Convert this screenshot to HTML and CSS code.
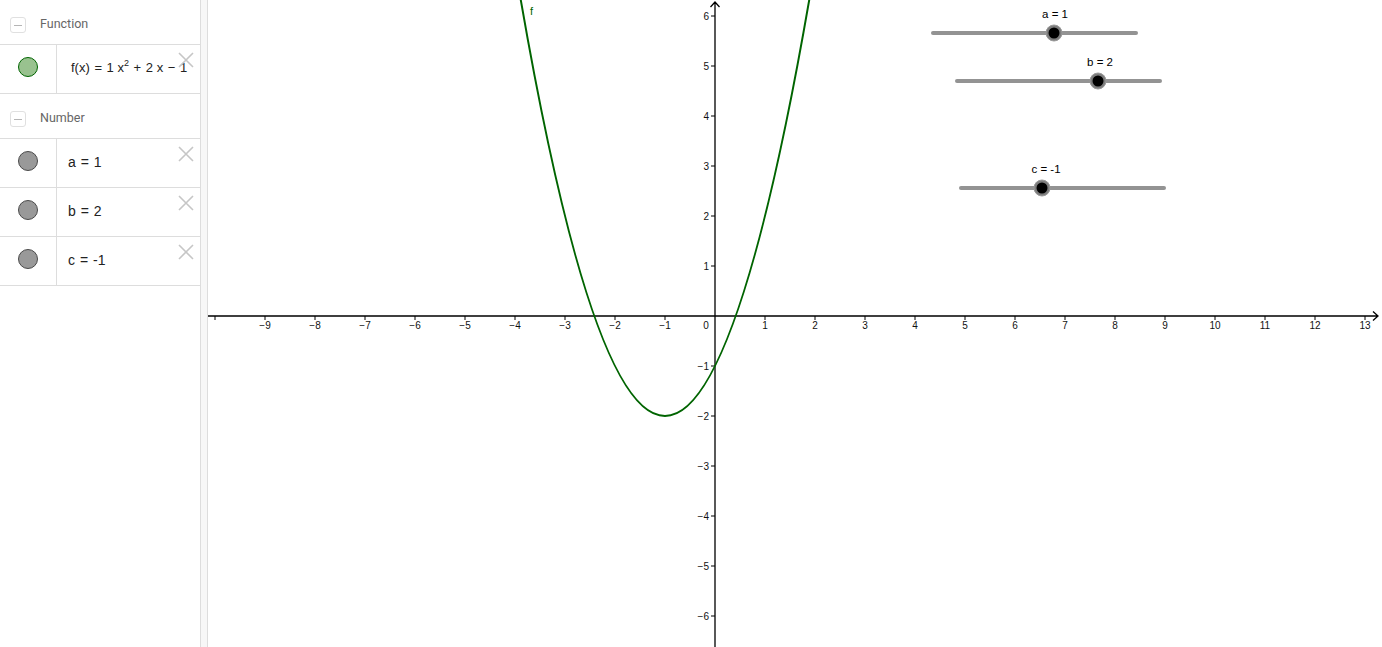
FILE: index.html
```html
<!DOCTYPE html>
<html lang="en">
<head>
<meta charset="utf-8">
<title>Quadratic sliders</title>
<link rel="stylesheet" href="styles.css">
</head>
<body>
<div class="app">
  <aside class="algebra">
    <div class="group-head">
      <span class="toggle"><span class="toggle-bar"></span></span>
      <span class="group-title">Function</span>
    </div>
    <div class="item">
      <div class="marker"><span class="dot dot-fn"></span></div>
      <div class="expr expr-fn">f(x) <span class="op">=</span> 1 x<sup>2</sup> <span class="op">+</span> 2 x <span class="op">−</span> 1</div>
      <span class="del"><svg viewBox="0 0 16 16" width="16" height="16"><path d="M1 1L15 15M15 1L1 15"/></svg></span>
    </div>

    <div class="group-head">
      <span class="toggle"><span class="toggle-bar"></span></span>
      <span class="group-title">Number</span>
    </div>
    <div class="item">
      <div class="marker"><span class="dot dot-num"></span></div>
      <div class="expr">a <span class="op">=</span> 1</div>
      <span class="del"><svg viewBox="0 0 16 16" width="16" height="16"><path d="M1 1L15 15M15 1L1 15"/></svg></span>
    </div>
    <div class="item">
      <div class="marker"><span class="dot dot-num"></span></div>
      <div class="expr">b <span class="op">=</span> 2</div>
      <span class="del"><svg viewBox="0 0 16 16" width="16" height="16"><path d="M1 1L15 15M15 1L1 15"/></svg></span>
    </div>
    <div class="item">
      <div class="marker"><span class="dot dot-num"></span></div>
      <div class="expr">c <span class="op">=</span> -1</div>
      <span class="del"><svg viewBox="0 0 16 16" width="16" height="16"><path d="M1 1L15 15M15 1L1 15"/></svg></span>
    </div>
  </aside>

  <div class="splitter"></div>

  <main class="graphics">
    <svg class="plot" width="1174" height="647" viewBox="208 0 1174 647">
      <!-- axes -->
      <path class="axis" d="M208 316H1378M1373 311.5L1378 316L1373 320.5"/>
      <path class="axis" d="M715 2V647M710.5 7L715 2L719.5 7"/>
      <!-- ticks -->
      <path class="tick" d="M215 316v4M265 316v4M315 316v4M365 316v4M415 316v4M465 316v4M515 316v4M565 316v4M615 316v4M665 316v4M765 316v4M815 316v4M865 316v4M915 316v4M965 316v4M1015 316v4M1065 316v4M1115 316v4M1165 316v4M1215 316v4M1265 316v4M1315 316v4M1365 316v4"/>
      <path class="tick" d="M711 16h4M711 66h4M711 116h4M711 166h4M711 216h4M711 266h4M711 366h4M711 416h4M711 466h4M711 516h4M711 566h4M711 616h4"/>
      <!-- x labels -->
      <g class="lbl lbl-x">
        <text x="265" y="329">−9</text>
        <text x="315" y="329">−8</text>
        <text x="365" y="329">−7</text>
        <text x="415" y="329">−6</text>
        <text x="465" y="329">−5</text>
        <text x="515" y="329">−4</text>
        <text x="565" y="329">−3</text>
        <text x="615" y="329">−2</text>
        <text x="665" y="329">−1</text>
        <text x="706" y="329">0</text>
        <text x="765" y="329">1</text>
        <text x="815" y="329">2</text>
        <text x="865" y="329">3</text>
        <text x="915" y="329">4</text>
        <text x="965" y="329">5</text>
        <text x="1015" y="329">6</text>
        <text x="1065" y="329">7</text>
        <text x="1115" y="329">8</text>
        <text x="1165" y="329">9</text>
        <text x="1215" y="329">10</text>
        <text x="1265" y="329">11</text>
        <text x="1315" y="329">12</text>
        <text x="1365" y="329">13</text>
      </g>
      <!-- y labels -->
      <g class="lbl lbl-y">
        <text x="709" y="20">6</text>
        <text x="709" y="70">5</text>
        <text x="709" y="120">4</text>
        <text x="709" y="170">3</text>
        <text x="709" y="220">2</text>
        <text x="709" y="270">1</text>
        <text x="709" y="370">−1</text>
        <text x="709" y="420">−2</text>
        <text x="709" y="470">−3</text>
        <text x="709" y="520">−4</text>
        <text x="709" y="570">−5</text>
        <text x="709" y="620">−6</text>
      </g>
      <!-- parabola f(x) = x^2 + 2x - 1 -->
      <path class="curve" d="M505 -96Q665 928 825 -96"/>
      <text class="curve-label" x="530" y="15">f</text>

      <!-- sliders -->
      <g class="slider">
        <text class="slider-label" x="1055" y="18">a = 1</text>
        <line class="slider-track" x1="933" y1="33" x2="1136" y2="33"/>
        <circle class="knob-ring" cx="1054" cy="33" r="8"/>
        <circle class="knob" cx="1054" cy="33" r="5.5"/>
      </g>
      <g class="slider">
        <text class="slider-label" x="1100" y="66">b = 2</text>
        <line class="slider-track" x1="957" y1="81" x2="1160" y2="81"/>
        <circle class="knob-ring" cx="1098" cy="81" r="8"/>
        <circle class="knob" cx="1098" cy="81" r="5.5"/>
      </g>
      <g class="slider">
        <text class="slider-label" x="1046" y="173">c = -1</text>
        <line class="slider-track" x1="961" y1="188" x2="1164" y2="188"/>
        <circle class="knob-ring" cx="1042" cy="188" r="8"/>
        <circle class="knob" cx="1042" cy="188" r="5.5"/>
      </g>
    </svg>
  </main>
</div>
</body>
</html>
```

FILE: styles.css
```css
html, body {
  margin: 0;
  padding: 0;
  background: #fff;
  overflow: hidden;
}

.app {
  display: flex;
  width: 1382px;
  height: 647px;
}

/* ---------- algebra view ---------- */
.algebra {
  width: 200px;
  flex: none;
  overflow: hidden;
  background: #fff;
  font-family: "Liberation Sans", Arial, sans-serif;
}

.group-head {
  box-sizing: border-box;
  height: 45px;
  display: flex;
  align-items: flex-start;
  padding-top: 16px;
  border-bottom: 1px solid #dddddd;
}

.toggle {
  box-sizing: border-box;
  width: 16px;
  height: 16px;
  margin-top: 1px;
  margin-left: 10px;
  border: 1px solid #e0e0e0;
  border-radius: 3px;
  display: flex;
  align-items: center;
  justify-content: center;
}

.toggle-bar {
  width: 8px;
  height: 1px;
  background: #b5b5b5;
}

.group-title {
  margin-left: 14px;
  font-family: Roboto, "Liberation Sans", sans-serif;
  font-size: 12.5px;
  line-height: 16px;
  color: #666;
}

.item {
  position: relative;
  box-sizing: border-box;
  height: 49px;
  display: flex;
  border-bottom: 1px solid #dddddd;
}

.marker {
  width: 56px;
  flex: none;
  border-right: 1px solid #dddddd;
  display: flex;
  justify-content: center;
  align-items: flex-start;
}

.dot {
  box-sizing: border-box;
  width: 20px;
  height: 20px;
  margin-top: 12px;
  border-radius: 50%;
}

.dot-fn {
  background: #99c28f;
  border: 1px solid #006400;
}

.dot-num {
  background: #999999;
  border: 1px solid #4a4a4a;
}

.expr {
  padding: 13px 0 0 11px;
  font-size: 14px;
  line-height: 20px;
  color: #222;
  white-space: nowrap;
}

.expr .op {
  margin: 0 1px;
}

.expr-fn {
  padding-left: 14px;
  font-size: 13px;
}

.expr-fn .op {
  margin: 0 1px;
}

.expr sup {
  font-size: 9px;
  line-height: 0;
  vertical-align: 6px;
}

.del {
  position: absolute;
  top: 7px;
  right: 6px;
  width: 16px;
  height: 16px;
  display: block;
}

.del svg {
  display: block;
}

.del path {
  stroke: #c6c6c6;
  stroke-width: 1.6;
  fill: none;
}

/* ---------- splitter ---------- */
.splitter {
  box-sizing: border-box;
  width: 8px;
  flex: none;
  background: #f7f7f7;
  border-left: 1px solid #dddddd;
  border-right: 1px solid #dddddd;
}

/* ---------- graphics view ---------- */
.graphics {
  flex: 1;
  position: relative;
  overflow: hidden;
}

.plot {
  display: block;
}

.axis {
  stroke: #000;
  stroke-width: 1.3;
  fill: none;
}

.tick {
  stroke: #000;
  stroke-width: 1;
  fill: none;
}

.lbl {
  font-family: "Liberation Sans", Arial, sans-serif;
  font-size: 10px;
  fill: #111;
}

.lbl-x {
  text-anchor: middle;
}

.lbl-y {
  text-anchor: end;
}

.curve {
  stroke: #006400;
  stroke-width: 2;
  fill: none;
}

.curve-label {
  font-family: "Liberation Sans", Arial, sans-serif;
  font-size: 11px;
  fill: #006400;
}

.slider-label {
  font-family: "Liberation Sans", Arial, sans-serif;
  font-size: 11.5px;
  fill: #000;
  text-anchor: middle;
}

.slider-track {
  stroke: #939393;
  stroke-width: 4;
  stroke-linecap: round;
}

.knob-ring {
  fill: #7d7d7d;
  stroke: #9a9a9a;
  stroke-width: 1;
}

.knob {
  fill: #000;
}
```
